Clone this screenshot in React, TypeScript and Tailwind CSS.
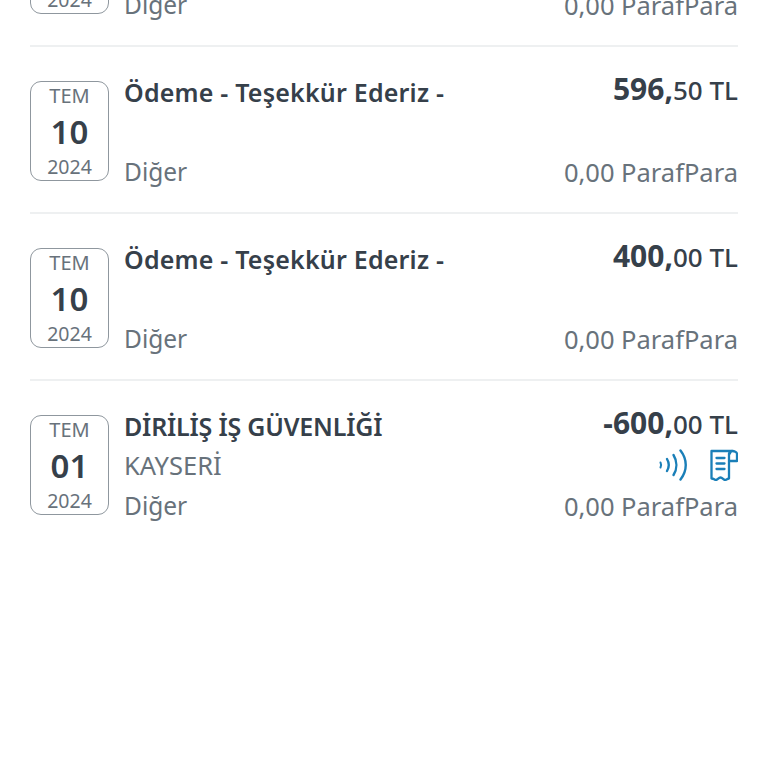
const rows = [
  { day: '10', title: 'Ödeme - Teşekkür Ederiz -', city: '', whole: '500,', cents: '00 TL', icons: false },
  { day: '10', title: 'Ödeme - Teşekkür Ederiz -', city: '', whole: '596,', cents: '50 TL', icons: false },
  { day: '10', title: 'Ödeme - Teşekkür Ederiz -', city: '', whole: '400,', cents: '00 TL', icons: false },
  { day: '01', title: 'DİRİLİŞ İŞ GÜVENLİĞİ', city: 'KAYSERİ', whole: '-600,', cents: '00 TL', icons: true },
];

const ContactlessIcon = () => (
  <svg width="30" height="32" viewBox="0 0 30 32" fill="none" stroke="#1a7fb8" strokeWidth="2.400" strokeLinecap="round">
    <path d="M1.500 13.500c.8 1.600.8 3.400 0 5" strokeWidth="2" />
    <path d="M8 10c2.200 3.700 2.200 8.300 0 12" />
    <path d="M14.500 6c3.800 6.100 3.800 13.900 0 20" />
    <path d="M21.500 1.500c7 9 7 20 0 29" />
  </svg>
);

const ReceiptIcon = () => (
  <svg width="28" height="32" viewBox="0 0 28 32" fill="none" stroke="#1a7fb8" strokeWidth="2.300" strokeLinejoin="round" strokeLinecap="round">
    <path d="M22 2H1.500v27.500c2-.2 3 1.500 4.500 1.500s2.500-2.500 4.500-2.500 3 2.500 4.500 2.500 2.500-1.500 4-1.500V4.500" />
    <path d="M20 4.500C20 3 21 2 22.500 2S27 3 27 5v7h-7" />
    <path d="M6.500 9h8M6.500 14.500h8M6.500 20h8" />
  </svg>
);

const Row = ({ row }: { row: (typeof rows)[number] }) => (
  <div className="flex h-[167px] border-b-2 border-[#eef0f1] pt-[34px] last:border-b-0">
    <div className="flex h-[100px] w-[79px] shrink-0 flex-col items-center rounded-[11px] border border-[#8f979e]">
      <span className="text-[20px] leading-[28px] text-[#68727b]">TEM</span>
      <span className="mt-[1px] text-[33px] leading-[41px] font-semibold text-[#36404a]">{row.day}</span>
      <span className="mt-[1px] text-[19.500px] leading-[28px] text-[#68727b]">2024</span>
    </div>
    <div className="ml-[15px] flex h-[114px] min-w-0 flex-1 flex-col">
      <div className="flex h-[32px] items-start justify-between">
        <span className={`text-[25px] leading-[22px] font-semibold text-[#36404a] ${row.icons ? 'tracking-[-0.2px]' : 'tracking-[0.2px]'}`}>
          {row.title}
        </span>
        <span className="text-[26px] leading-[16px] font-medium text-[#36404a]">
          <span className="text-[30px] font-bold">{row.whole}</span>
          {row.cents}
        </span>
      </div>
      <div className="flex h-[36px] items-center justify-between">
        <span className="text-[25.500px] leading-[28px] text-[#68727b]">{row.city}</span>
        {row.icons && (
          <div className="flex items-center gap-[21px]">
            <ContactlessIcon />
            <ReceiptIcon />
          </div>
        )}
      </div>
      <div className="flex h-[46px] items-center justify-between">
        <span className="text-[24.500px] leading-[28px] text-[#68727b]">Diğer</span>
        <span className="text-[25.500px] leading-[28px] text-[#68727b]">0,00 ParafPara</span>
      </div>
    </div>
  </div>
);

export default function App() {
  return (
    <div className="h-[768px] overflow-hidden bg-white font-['Noto_Sans',sans-serif]">
      <div className="mt-[-120px] px-[30px]">
        {rows.map((row, i) => (
          <Row key={i} row={row} />
        ))}
      </div>
    </div>
  );
}
